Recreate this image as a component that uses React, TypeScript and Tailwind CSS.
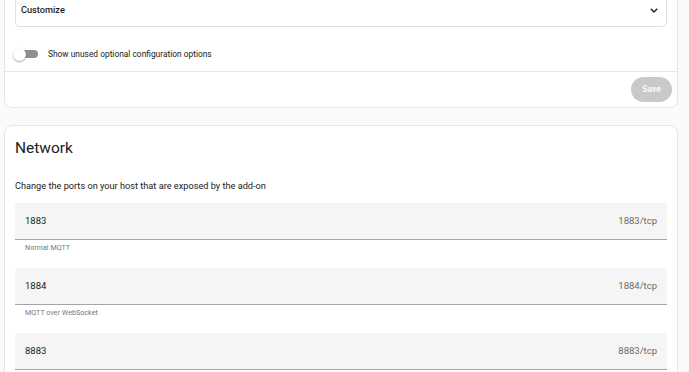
const ports = [
  { value: "1883", suffix: "1883/tcp", help: <>Normal MQTT</> },
  {
    value: "1884",
    suffix: "1884/tcp",
    help: (
      <>
        MQTT over <span className="text-[#5a7a9c]">WebSocket</span>
      </>
    ),
  },
  { value: "8883", suffix: "8883/tcp", help: null },
];

function PortField({ value, suffix, help }: { value: string; suffix: string; help: React.ReactNode }) {
  return (
    <div className="mb-[15px]">
      <div className="h-[37px] bg-[#f5f5f5] rounded-t-[3px] border-b border-[#a5a5a5] flex items-center justify-between px-[10px] text-[9.5px]">
        <span className="text-[#212121]">{value}</span>
        <span className="text-[#6b6b6b]">{suffix}</span>
      </div>
      {help && (
        <div className="pl-[10px] mt-[3px] text-[7.2px] leading-[10px] text-[#7a7a7a]">{help}</div>
      )}
    </div>
  );
}

export default function App() {
  return (
    <div className="h-[372px] overflow-hidden bg-[#fafafa] font-['Roboto',sans-serif]">
      <div className="ml-[4px] mr-[11px] -mt-[18px] bg-white border border-[#e6e6e6] rounded-[8px]">
        <div className="px-[10px] pt-[10px]">
          <div className="h-[34px] border border-[#e0e0e0] rounded-[4px] flex items-center justify-between pl-[5px] pr-[8px]">
            <span className="text-[9.2px] font-medium text-[#1c1c1c]">Customize</span>
            <svg width="8" height="5" viewBox="0 0 8 5" fill="none">
              <path d="M0.8 0.8 L4 4 L7.2 0.8" stroke="#222" strokeWidth="1.4" />
            </svg>
          </div>
          <div className="mt-[19px] mb-[9px] h-[16px] flex items-center">
            <div className="relative w-[25px] h-[14px] -ml-[2px] flex items-center">
              <div className="absolute left-[4px] w-[21px] h-[8px] rounded-full bg-[#8f8f8f]" />
              <div className="absolute left-0 w-[13px] h-[13px] rounded-full bg-white shadow-[0_1px_2px_rgba(0,0,0,0.35)]" />
            </div>
            <span className="ml-[10px] text-[8.4px] text-[#212121]">Show unused optional configuration options</span>
          </div>
        </div>
        <div className="border-t border-[#e6e6e6] flex justify-end pt-[5px] pb-[5px] pr-[5px]">
          <div className="w-[41px] h-[25px] rounded-full bg-[#c9c9c9] text-white text-[8.5px] font-medium flex items-center justify-center">
            Save
          </div>
        </div>
      </div>

      <div className="ml-[4px] mr-[11px] mt-[17px] bg-white border border-[#e6e6e6] rounded-[8px] px-[10px] pt-[12px]">
        <div className="text-[15.5px] leading-[20px] text-[#212121]">Network</div>
        <div className="mt-[22px] text-[9.2px] leading-[12px] text-[#212121]">
          Change the ports on your host that are exposed by the add-on
        </div>
        <div className="mt-[11px]">
          {ports.map((p) => (
            <PortField key={p.value} value={p.value} suffix={p.suffix} help={p.help} />
          ))}
        </div>
      </div>
    </div>
  );
}
